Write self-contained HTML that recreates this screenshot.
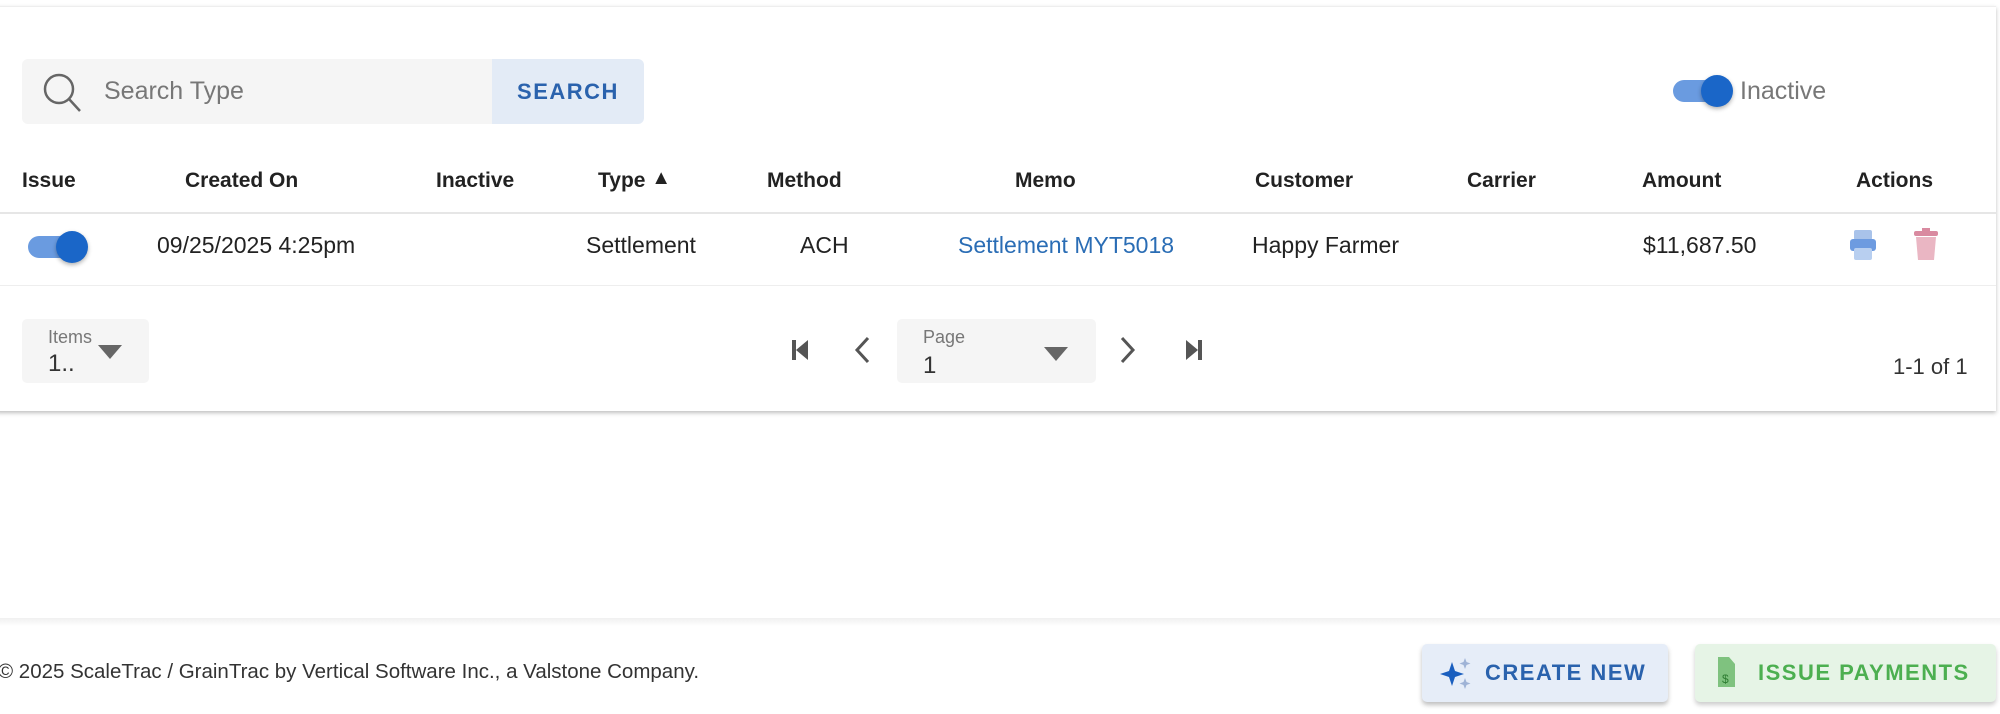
<!DOCTYPE html>
<html><head><meta charset="utf-8"><style>
*{box-sizing:border-box;margin:0;padding:0}
body{width:2000px;height:714px;background:#fff;font-family:"Liberation Sans",sans-serif;color:#222;position:relative;overflow:hidden}
.a{position:absolute;white-space:nowrap}
.card{position:absolute;left:-4px;top:6px;width:2000px;height:405px;border-top:1px solid #eee;box-shadow:0 2px 4px rgba(0,0,0,.25)}
.h{font-size:21px;font-weight:bold;color:#222;top:169px}
.c{font-size:23px;top:232px;color:#222}
.tog{position:absolute;width:60px;height:26px}
.tog .tr{position:absolute;left:0;top:3px;width:56px;height:22px;border-radius:11px;background:#6a9be0}
.tog .th{position:absolute;right:0;top:-2px;width:32px;height:32px;border-radius:50%;background:#1a66c8;box-shadow:0 2px 4px rgba(0,0,0,.3)}
</style></head><body>
<div class="card"></div>
<div class="a" style="left:22px;top:59px;width:470px;height:65px;background:#f5f5f5;border-radius:6px 0 0 6px"></div>
<svg class="a" style="left:40px;top:70px" width="44" height="44" viewBox="0 0 44 44"><circle cx="19" cy="19" r="14" fill="none" stroke="#666" stroke-width="2.5"/><line x1="29" y1="29" x2="40" y2="41" stroke="#666" stroke-width="2.5"/></svg>
<div class="a" style="left:104px;top:77px;font-size:25px;color:#777">Search Type</div>
<div class="a" style="left:492px;top:59px;width:152px;height:65px;background:#e3ebf6;border-radius:0 6px 6px 0;color:#2a62ad;font-size:22px;font-weight:bold;letter-spacing:1.5px;text-align:center;line-height:65px">SEARCH</div>
<div class="tog" style="left:1673px;top:77px"><div class="tr"></div><div class="th"></div></div>
<div class="a" style="left:1740px;top:77px;font-size:25px;color:#777">Inactive</div>
<div class="a h" style="left:22px">Issue</div>
<div class="a h" style="left:185px">Created On</div>
<div class="a h" style="left:436px">Inactive</div>
<div class="a h" style="left:598px">Type <span style="font-size:20px;position:relative;top:-3px">&#9650;</span></div>
<div class="a h" style="left:767px">Method</div>
<div class="a h" style="left:1015px">Memo</div>
<div class="a h" style="left:1255px">Customer</div>
<div class="a h" style="left:1467px">Carrier</div>
<div class="a h" style="left:1642px">Amount</div>
<div class="a h" style="left:1856px">Actions</div>
<div class="a" style="left:0;top:212px;width:1996px;height:2px;background:#e6e6e6"></div>
<div class="tog" style="left:28px;top:233px"><div class="tr"></div><div class="th"></div></div>
<div class="a c" style="left:157px">09/25/2025 4:25pm</div>
<div class="a c" style="left:586px">Settlement</div>
<div class="a c" style="left:800px">ACH</div>
<div class="a c" style="left:958px;color:#2a6db5">Settlement MYT5018</div>
<div class="a c" style="left:1252px">Happy Farmer</div>
<div class="a c" style="left:1643px">$11,687.50</div>
<svg class="a" style="left:1848px;top:228px" width="30" height="34" viewBox="0 0 30 34"><rect x="6" y="2" width="18" height="10" rx="2" fill="#a9c3ea"/><rect x="2" y="11" width="26" height="12" rx="3" fill="#6d9be0"/><rect x="6" y="20" width="18" height="12" rx="2" fill="#b8cff0"/></svg>
<svg class="a" style="left:1912px;top:226px" width="28" height="36" viewBox="0 0 28 36"><rect x="10" y="2" width="8" height="4" fill="#d98aa0"/><rect x="2" y="5" width="24" height="5" rx="2" fill="#d98aa0"/><path d="M4 11h20l-2 23H6z" fill="#eab6c3"/></svg>
<div class="a" style="left:0;top:285px;width:1996px;height:1px;background:#eee"></div>
<div class="a" style="left:22px;top:319px;width:127px;height:64px;background:#f5f5f5;border-radius:5px"></div>
<div class="a" style="left:48px;top:327px;font-size:18px;color:#777">Items</div>
<div class="a" style="left:48px;top:350px;font-size:24px;color:#333">1..</div>
<svg class="a" style="left:98px;top:345px" width="24" height="14"><path d="M0 0h24L12 14z" fill="#666"/></svg>
<svg class="a" style="left:790px;top:338px" width="22" height="24"><rect x="2" y="2" width="4" height="20" fill="#555"/><path d="M18 2v20L6 12z" fill="#555"/></svg>
<svg class="a" style="left:852px;top:336px" width="20" height="28"><path d="M16 2L5 14l11 12" fill="none" stroke="#555" stroke-width="3"/></svg>
<div class="a" style="left:897px;top:319px;width:199px;height:64px;background:#f5f5f5;border-radius:5px"></div>
<div class="a" style="left:923px;top:327px;font-size:18px;color:#777">Page</div>
<div class="a" style="left:923px;top:352px;font-size:24px;color:#333">1</div>
<svg class="a" style="left:1044px;top:347px" width="24" height="14"><path d="M0 0h24L12 14z" fill="#666"/></svg>
<svg class="a" style="left:1118px;top:336px" width="20" height="28"><path d="M4 2l11 12L4 26" fill="none" stroke="#555" stroke-width="3"/></svg>
<svg class="a" style="left:1182px;top:338px" width="22" height="24"><path d="M4 2v20l12-10z" fill="#555"/><rect x="16" y="2" width="4" height="20" fill="#555"/></svg>
<div class="a" style="left:1893px;top:354px;font-size:22px;color:#333">1-1 of 1</div>
<div class="a" style="left:0;top:618px;width:2000px;height:8px;background:linear-gradient(#f0f0f0,#fff)"></div>
<div class="a" style="left:-2px;top:660px;font-size:20.5px;color:#333">© 2025 ScaleTrac / GrainTrac by Vertical Software Inc., a Valstone Company.</div>
<div class="a" style="left:1422px;top:644px;width:246px;height:58px;background:#e6edf8;border-radius:5px;box-shadow:0 3px 5px rgba(0,0,0,.25)"></div>
<svg class="a" style="left:1440px;top:656px" width="32" height="34" viewBox="0 0 32 34"><path d="M12 6l3 9 9 3-9 3-3 9-3-9-9-3 9-3z" fill="#1a5fbf"/><path d="M25 2l1.5 4 4 1.5-4 1.5-1.5 4-1.5-4-4-1.5 4-1.5z" fill="#9fb3d6"/><path d="M25 22l1.5 4 4 1.5-4 1.5-1.5 4-1.5-4-4-1.5 4-1.5z" fill="#9fb3d6"/></svg>
<div class="a" style="left:1485px;top:660px;font-size:22px;font-weight:bold;color:#2a62ad;letter-spacing:1.5px">CREATE NEW</div>
<div class="a" style="left:1695px;top:644px;width:301px;height:58px;background:#e6f4e6;border-radius:5px;box-shadow:0 3px 5px rgba(0,0,0,.2)"></div>
<svg class="a" style="left:1716px;top:655px" width="20" height="34" viewBox="0 0 20 34"><path d="M2 2h11l6 7v23H2z" fill="#7fc27f"/><text x="6" y="28" font-size="12" font-family="Liberation Sans" fill="#2e7d32">$</text></svg>
<div class="a" style="left:1758px;top:660px;font-size:22px;font-weight:bold;color:#4caf50;letter-spacing:1.5px">ISSUE PAYMENTS</div>
</body></html>
